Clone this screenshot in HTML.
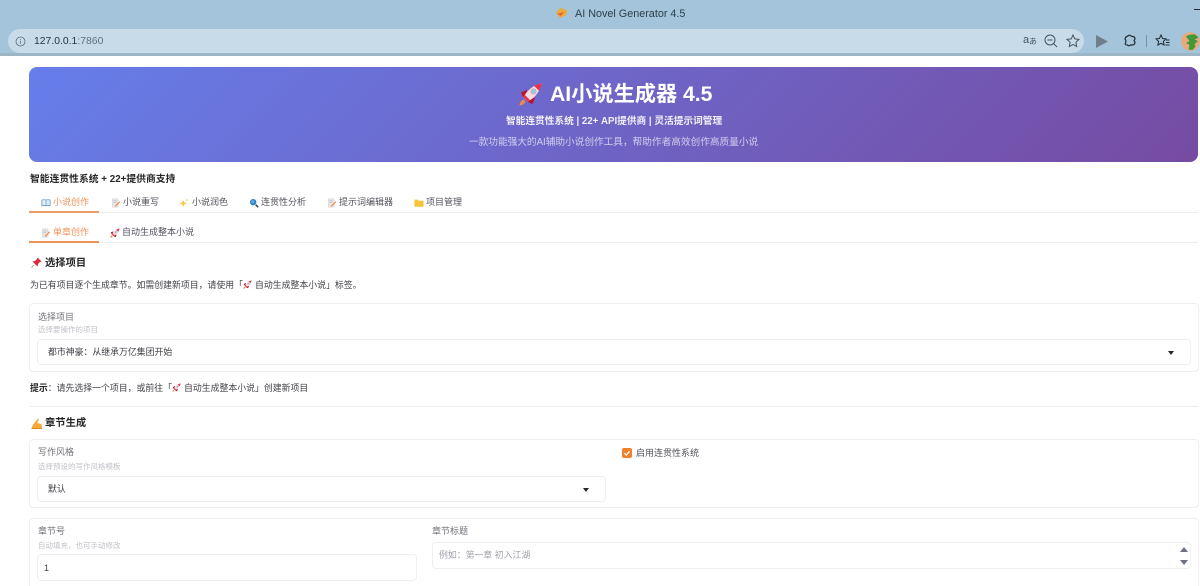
<!DOCTYPE html>
<html lang="zh"><head><meta charset="utf-8"><title>AI Novel Generator 4.5</title>
<style>
html,body{margin:0;padding:0;width:1200px;height:586px;overflow:hidden;background:#fff}
body{position:relative;font-family:"Liberation Sans","Noto Sans CJK SC",sans-serif;color:#27272a;font-size:9px;filter:blur(.3px)}
.a{position:absolute;white-space:nowrap}
.t{line-height:14px}
svg{position:absolute;display:block}
.box{position:absolute;border:1px solid #eeeff1;border-radius:4px;background:#fff;box-sizing:border-box}
.lab{color:#71717a;font-size:9px;line-height:14px}
.sub{color:#c0c2c8;font-size:7.5px;line-height:10px}
.b{font-weight:700}
.g{color:#52525b}
.o{color:#f0935a}
.s{font-size:8.9px}
.caret{position:absolute;width:0;height:0;border-left:3.5px solid transparent;border-right:3.5px solid transparent;border-top:4px solid #27272a}
</style></head><body>
<svg width="0" height="0" style="position:absolute"><defs>
<symbol id="rocket" viewBox="0 0 24 24"><path d="M4.500 17.500 Q1 19 .5 23.500 Q5 23 6.500 19.500Z" fill="#f08a4b"/><path d="M8 8 L2 10.500 L4 15 L8 14Z M16 16 L13.500 22 L9 20 L10 16Z" fill="#b8122f"/><path d="M4.500 15.500 Q9 5 23 1 Q19 15 8.500 19.500Z" fill="#f3dde1"/><path d="M15 3.800 Q19 2 23 1 Q22 5 20.300 9Z" fill="#e8334f"/><path d="M4.500 15.500 L8.500 19.500 L11 18 L6 13Z" fill="#e8334f"/><circle cx="14.500" cy="9.500" r="2.600" fill="#8fd0e8" stroke="#e99aa8" stroke-width=".7"/></symbol>
<symbol id="memo" viewBox="0 0 12 12"><path d="M1.500 1h7v10h-7z" fill="#e9e6ea" stroke="#c9c5cc" stroke-width=".5"/><path d="M3 3.500h4M3 5.500h3" stroke="#a9a5ad" stroke-width=".6"/><path d="M5 9l5-5 1 1-5 5-1.500.5z" fill="#f0853a"/></symbol>
<symbol id="book" viewBox="0 0 12 12"><path d="M1 2.500q2.500-1 5 0q2.500-1 5 0v7q-2.500-1-5 0q-2.500-1-5 0z" fill="#dcebf5" stroke="#5a8fb5" stroke-width=".8"/><path d="M6 2.500v7" stroke="#5a8fb5" stroke-width=".7"/></symbol>
<symbol id="spark" viewBox="0 0 12 12"><path d="M5 2l1.200 3.300L10 6.500 6.200 7.700 5 11 3.800 7.700 .5 6.500 3.800 5.300z" fill="#f7c84a"/><path d="M9.500 .5l.5 1.500 1.500.5-1.500.5-.5 1.500-.5-1.500-1.500-.5 1.500-.5z" fill="#f7d46a"/></symbol>
<symbol id="search" viewBox="0 0 12 12"><circle cx="5" cy="5" r="3.800" fill="#2f7fc4"/><circle cx="4.500" cy="4.500" r="2" fill="#5ea9e0"/><path d="M8 8l3 3" stroke="#344a5c" stroke-width="1.800"/></symbol>
<symbol id="folder" viewBox="0 0 12 12"><path d="M.5 2h4l1 1.300h6v7.200h-11z" fill="#f7c338"/></symbol>
</defs></svg>

<!-- browser chrome -->
<div class="a" style="left:0;top:0;width:1200px;height:55px;background:#a3c4da"></div>
<div class="a" style="left:0;top:53px;width:1200px;height:3px;background:#9db6c6"></div>
<div class="a" style="left:8px;top:29px;width:1076px;height:24px;background:#c8dbe9;border-radius:12px"></div>
<svg style="left:555px;top:7px" width="13" height="12" viewBox="0 0 13 12"><path d="M1 6l4-5 7 2-1 5-6 3z" fill="#eda93c"/><path d="M2 7l7-2-3 4z" fill="#e2683a"/></svg>
<div class="a" style="left:575px;top:7px;font-size:10.800px;line-height:14px;color:#2c3e4a">AI Novel Generator 4.5</div>
<svg style="left:15px;top:36px" width="11" height="11" viewBox="0 0 11 11" fill="none" stroke="#5d6c76"><circle cx="5.500" cy="5.500" r="4.500" stroke-width=".8"/><path d="M5.500 3v.8M5.500 4.800v3" stroke-width=".8"/></svg>
<div class="a" style="left:34px;top:35px;font-size:10.400px;line-height:14px;color:#27343c">127.0.0.1<span style="color:#5f7280">:7860</span></div>
<div class="a" style="left:1023px;top:33px;font-size:11px;line-height:14px;color:#46565f">a</div>
<div class="a" style="left:1029px;top:36px;font-size:8px;line-height:12px;color:#46565f;font-family:'Noto Sans CJK JP',sans-serif">あ</div>
<svg style="left:1044px;top:34px" width="14" height="14" viewBox="0 0 14 14" fill="none" stroke="#46565f"><circle cx="6" cy="6" r="5"/><path d="M3.500 6h5M9.700 9.700l3.300 3.300"/></svg>
<svg style="left:1066px;top:34px" width="14" height="14" viewBox="0 0 14 14" fill="none" stroke="#46565f"><path d="M7 1l1.800 3.900 4.200.5-3.100 2.900.8 4.200L7 10.400l-3.700 2.100.8-4.200L1 5.400l4.200-.5z"/></svg>
<svg style="left:1095px;top:35px" width="13" height="13" viewBox="0 0 13 13"><path d="M1 0l12 6.500L1 13z" fill="#6f7f8a"/></svg>
<svg style="left:1123px;top:34px" width="14" height="14" viewBox="0 0 14 14" fill="none" stroke="#1f2c35" stroke-width="1.200"><path d="M5 2q1.500-1.500 3 0l1.500 0.500q2.500 0 2.500 2.500l-1 1.500 1 1.500q0 3-3 3H7.500q-1.500 1.500-3 0Q1.500 11 2.500 9 3.500 7 2 5 2.500 2.500 5 2z"/></svg>
<div class="a" style="left:1146px;top:35px;width:1px;height:12px;background:#7b919f"></div>
<svg style="left:1155px;top:34px" width="15" height="14" viewBox="0 0 15 14" fill="none" stroke="#1f2c35"><path d="M6 1l1.600 3.500 3.400.4-2.600 2.500.7 3.600L6 9.300l-3.100 1.700.7-3.600L1 4.900l3.400-.4zM11 6h3.500M11 8.500h3.500M10.500 11h4"/></svg>
<svg style="left:1181px;top:32px" width="19" height="19" viewBox="0 0 19 19"><circle cx="9.500" cy="9.500" r="9.300" fill="#e8a87c"/><path d="M5 4.500q4-2.500 9-2l3.500 3-4 2 3.500 1.500-3.500 3 1 2.500-3 3.500-4-.5 1-4.500-3.500-2 3.500-2z" fill="#3f9a35"/></svg>
<div class="a" style="left:1194px;top:9px;width:6px;height:1px;background:#1f2c35"></div>

<!-- hero -->
<div class="a" style="left:29px;top:67px;width:1169px;height:95px;border-radius:8px;background:linear-gradient(135deg,#667eea,#764ba2)"></div>
<svg style="left:519px;top:82px" width="24" height="24"><use href="#rocket"/></svg>
<div class="a b" style="left:550px;top:81px;font-size:21.200px;line-height:28px;color:#fff">AI小说生成器 4.5</div>
<div class="a b" style="left:506px;top:115px;font-size:9.700px;line-height:14px;color:#f2eef8">智能连贯性系统 | 22+ API提供商 | 灵活提示词管理</div>
<div class="a" style="left:469px;top:136px;font-size:9.670px;line-height:14px;color:rgba(255,255,255,.68)">一款功能强大的AI辅助小说创作工具，帮助作者高效创作高质量小说</div>

<div class="a t b" style="left:30px;top:173px;font-size:9.800px;color:#27272a">智能连贯性系统 + 22+提供商支持</div>

<!-- tabs 1 -->
<div class="a" style="left:29px;top:212px;width:1169px;height:1px;background:#eceef0"></div>
<div class="a" style="left:29px;top:211px;width:70px;height:2px;background:#eb9c6b"></div>
<svg style="left:41px;top:198px" width="10" height="10"><use href="#book"/></svg>
<div class="a t o" style="left:53px;top:195px">小说创作</div>
<svg style="left:111px;top:198px" width="10" height="10"><use href="#memo"/></svg>
<div class="a t g" style="left:123px;top:195px">小说重写</div>
<svg style="left:179px;top:198px" width="10" height="10"><use href="#spark"/></svg>
<div class="a t g" style="left:192px;top:195px">小说润色</div>
<svg style="left:249px;top:198px" width="10" height="10"><use href="#search"/></svg>
<div class="a t g" style="left:261px;top:195px">连贯性分析</div>
<svg style="left:327px;top:198px" width="10" height="10"><use href="#memo"/></svg>
<div class="a t g" style="left:339px;top:195px">提示词编辑器</div>
<svg style="left:414px;top:198px" width="10" height="10"><use href="#folder"/></svg>
<div class="a t g" style="left:426px;top:195px">项目管理</div>

<!-- tabs 2 -->
<div class="a" style="left:29px;top:242px;width:1169px;height:1px;background:#eceef0"></div>
<div class="a" style="left:29px;top:241px;width:70px;height:2px;background:#f0935a"></div>
<svg style="left:41px;top:228px" width="10" height="10"><use href="#memo"/></svg>
<div class="a t o" style="left:53px;top:225px">单章创作</div>
<svg style="left:110px;top:228px" width="10" height="10"><use href="#rocket"/></svg>
<div class="a t g" style="left:122px;top:225px">自动生成整本小说</div>

<!-- section 1 -->
<svg style="left:31px;top:257px" width="11" height="11" viewBox="0 0 11 11"><path d="M6.500 .5l4 4-1.500.5-2 2-.5 2.500-5-5 2.500-.5 2-2z" fill="#e0283c"/><path d="M3 8l-2.500 2.500" stroke="#8a8a8a" stroke-width=".8"/></svg>
<div class="a b" style="left:45px;top:257px;font-size:10.300px;line-height:14px">选择项目</div>
<div class="a t s" style="left:30px;top:278px;color:#3f3f46">为已有项目逐个生成章节。如需创建新项目，请使用「<svg style="position:static;display:inline-block;vertical-align:-1px;margin:0 3px 0 0" width="9" height="9"><use href="#rocket"/></svg>自动生成整本小说」标签。</div>

<div class="box" style="left:29px;top:303px;width:1170px;height:69px"></div>
<div class="a lab" style="left:38px;top:310px">选择项目</div>
<div class="a sub" style="left:38px;top:325px">选择要操作的项目</div>
<div class="box" style="left:37px;top:339px;width:1154px;height:26px"></div>
<div class="a t s" style="left:48px;top:345px;color:#3f3f46">都市神豪：从继承万亿集团开始</div>
<div class="caret" style="left:1168px;top:351px"></div>

<div class="a t s" style="left:30px;top:381px;color:#3f3f46"><span class="b" style="color:#27272a">提示</span>：请先选择一个项目，或前往「<svg style="position:static;display:inline-block;vertical-align:-1px;margin:0 3px 0 0" width="9" height="9"><use href="#rocket"/></svg>自动生成整本小说」创建新项目</div>
<div class="a" style="left:29px;top:406px;width:1169px;height:1px;background:#eceef0"></div>

<!-- section 2 -->
<svg style="left:31px;top:418px" width="12" height="11" viewBox="0 0 12 11"><path d="M.5 10.500L2 6.500 7 .5 8 1.500 6 5l4.500 1 .5 4.500z" fill="#f4a938"/><path d="M.5 10.500h10.500" stroke="#e08a20"/></svg>
<div class="a b" style="left:45px;top:417px;font-size:10.300px;line-height:14px">章节生成</div>

<div class="box" style="left:29px;top:439px;width:1170px;height:69px"></div>
<div class="a lab" style="left:38px;top:445px">写作风格</div>
<div class="a sub" style="left:38px;top:462px">选择预设的写作风格模板</div>
<div class="box" style="left:37px;top:476px;width:569px;height:26px"></div>
<div class="a t s" style="left:48px;top:482px;color:#3f3f46">默认</div>
<div class="caret" style="left:583px;top:488px"></div>
<div class="a" style="left:622px;top:448px;width:10px;height:10px;border-radius:2px;background:#f0822e"></div>
<svg style="left:622px;top:448px" width="10" height="10" viewBox="0 0 10 10" fill="none" stroke="#fff" stroke-width="1.300"><path d="M2.500 5.200l1.800 1.800 3.300-3.800"/></svg>
<div class="a t" style="left:636px;top:446px;color:#52525b">启用连贯性系统</div>

<div class="box" style="left:29px;top:518px;width:1170px;height:80px"></div>
<div class="a lab" style="left:38px;top:524px">章节号</div>
<div class="a sub" style="left:38px;top:541px">自动填充，也可手动修改</div>
<div class="box" style="left:37px;top:554px;width:380px;height:27px"></div>
<div class="a t" style="left:44px;top:561px;font-size:9px;color:#3f3f46">1</div>
<div class="a lab" style="left:432px;top:524px">章节标题</div>
<div class="box" style="left:432px;top:542px;width:759px;height:27px"></div>
<div class="a t s" style="left:439px;top:548px;color:#a1a1aa">例如：第一章 初入江湖</div>
<div class="a" style="left:1180px;top:547px;width:0;height:0;border-left:4px solid transparent;border-right:4px solid transparent;border-bottom:5px solid #6b7280"></div>
<div class="a" style="left:1180px;top:560px;width:0;height:0;border-left:4px solid transparent;border-right:4px solid transparent;border-top:5px solid #6b7280"></div>
</body></html>
